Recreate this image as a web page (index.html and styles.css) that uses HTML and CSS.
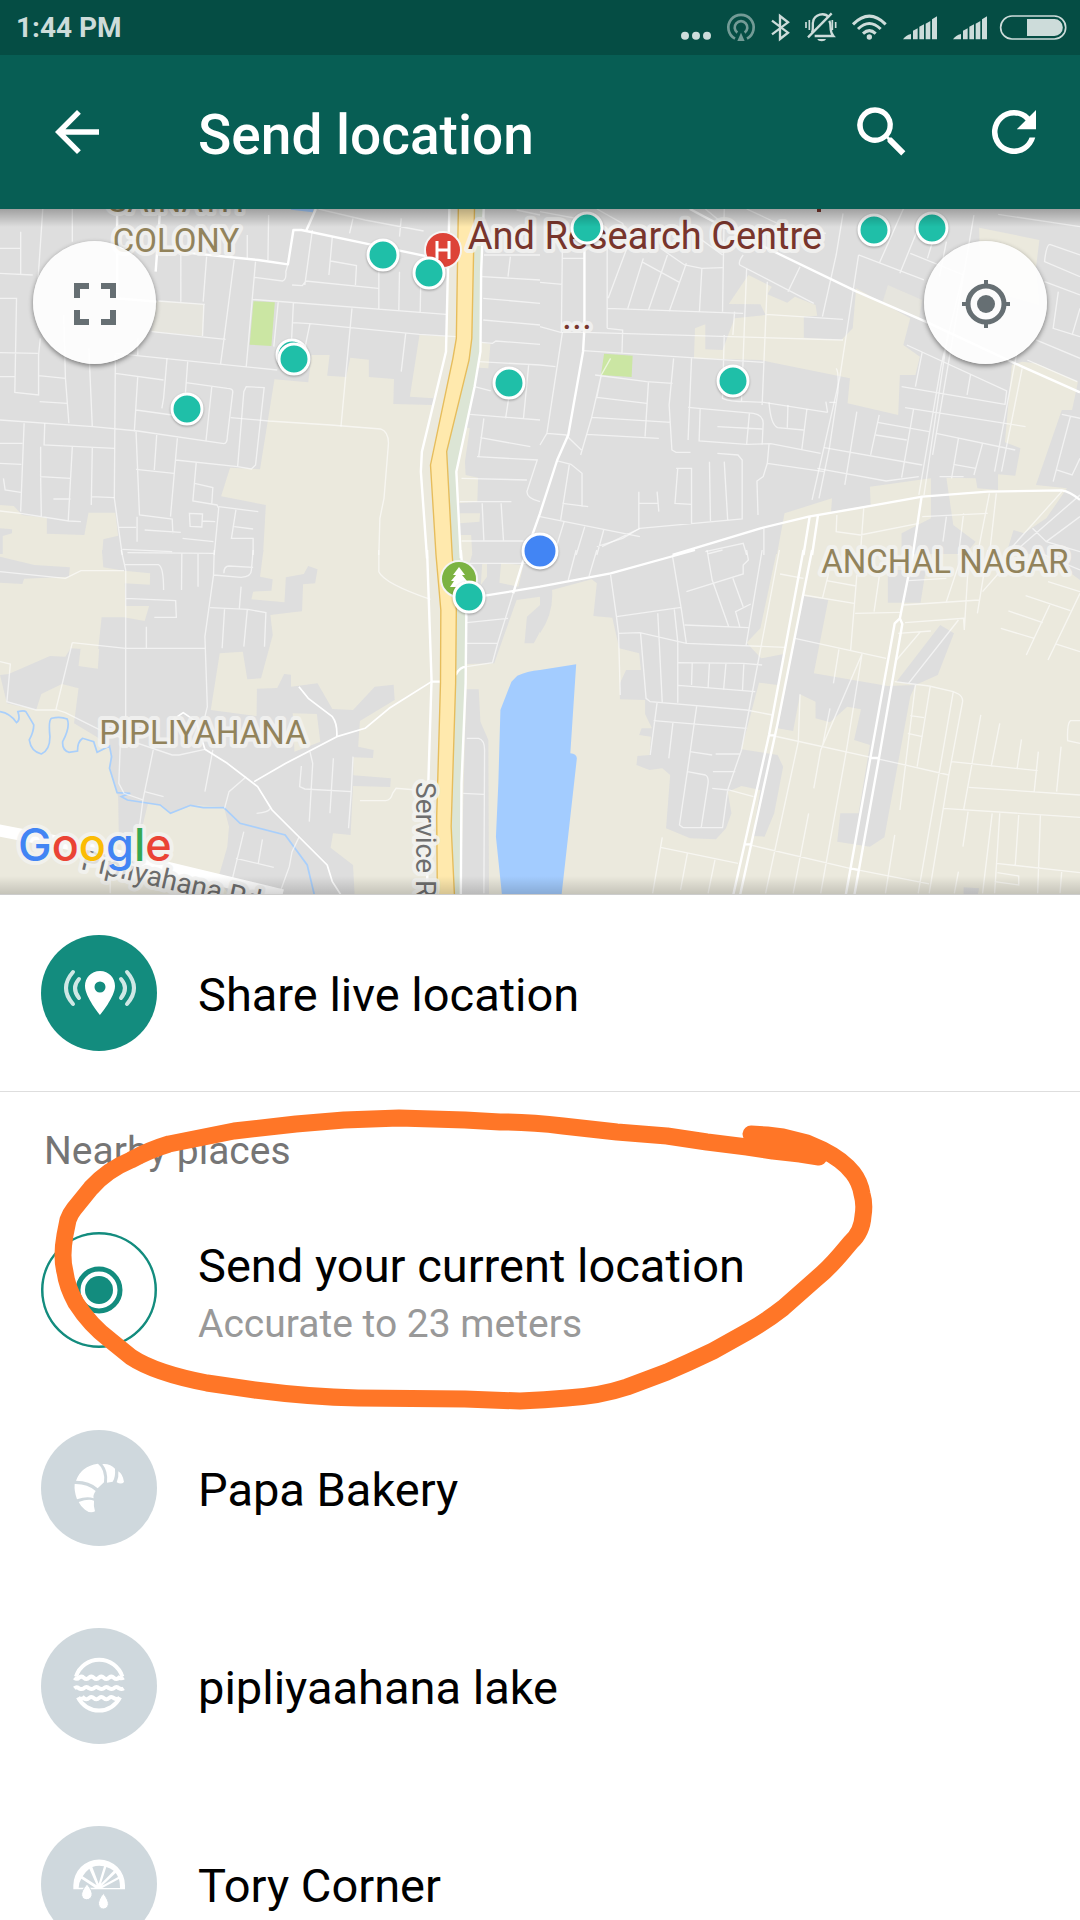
FILE: index.html
```html
<!DOCTYPE html>
<html lang="en">
<head>
    <meta charset="UTF-8">
    <meta name="viewport" content="width=device-width, initial-scale=1.0">
    <title>Send location</title>
    <link rel="stylesheet" href="styles.css">
</head>
<body>
<div class="screen">

    <div class="status-bar">
        <span class="clock">1:44 PM</span>
        <svg class="status-icons" viewBox="0 0 1260 165" aria-hidden="true">
            <!-- more -->
            <circle cx="75" cy="107" r="12"/><circle cx="108" cy="107" r="12"/><circle cx="141" cy="107" r="12"/>
            <!-- hotspot -->
            <g opacity=".55">
                <path class="line" stroke-width="8" d="M225 116a38 38 0 1 1 36 0M232 98a19 19 0 1 1 22 0"/>
                <path d="M243 98l11 25h-22z"/>
            </g>
            <!-- bluetooth -->
            <path class="line" stroke-width="7" d="M336 62l48 36-24 19V48l24 19-48 36"/>
            <!-- silent -->
            <path class="line" stroke-width="7" d="M456 98c5-12 1-24 3-32 4-24 34-30 48-14M508 62c8 16-2 30 12 46h-56"/>
            <path class="line" stroke-width="7" d="M444 112l71-72"/>
            <path class="line" stroke-width="5" d="M438 66v18M448 60v30M517 60v30M527 66v18"/>
            <path d="M472 117h26c-3 9-23 9-26 0z"/>
            <!-- wifi -->
            <path class="line" stroke-width="9" d="M579 73q49-49 98 0M594 87q34-33 68 0M609 101q19-18 38 0"/>
            <circle cx="628" cy="111" r="8"/>
            <!-- signal -->
            <path id="signal" d="M729 118q8-12 24-16v16zM759 92l14-7v33h-14zM778 80l14-7v45h-14zM797 71l14-8v55h-14zM816 58l15-9v69h-15z"/>
            <use href="#signal" x="150"/>
            <!-- battery -->
            <rect class="line" stroke-width="5" x="1022" y="48" width="195" height="69" rx="34"/>
            <path d="M1101 57h82a25 25 0 0 1 0 51h-82z"/>
        </svg>
    </div>

    <header class="app-bar">
        <button class="icon-button" aria-label="Back">
            <svg viewBox="0 0 24 24"><path d="M20 11H7.8l5.6-5.600L12 4l-8 8 8 8 1.400-1.400L7.800 13H20z"/></svg>
        </button>
        <h1>Send location</h1>
        <button class="icon-button" aria-label="Search">
            <svg viewBox="0 0 24 24"><path d="M15.5 14h-.8l-.3-.3A6.5 6.5 0 1 0 13.7 14.4l.3.3v.8l5 5 1.5-1.5zm-6 0a4.5 4.5 0 1 1 0-9 4.5 4.5 0 0 1 0 9z"/></svg>
        </button>
        <button class="icon-button" aria-label="Refresh">
            <svg viewBox="0 0 24 24"><path d="M17.65 6.35A7.96 7.96 0 0 0 12 4a8 8 0 1 0 7.73 10h-2.08A6 6 0 1 1 12 6c1.66 0 3.14.69 4.22 1.78L13 11h7V4z"/></svg>
        </button>
    </header>

    <section class="map" aria-label="Map">
        <svg class="map-canvas" viewBox="0 0 1080 685" preserveAspectRatio="xMidYMid slice">
            <rect class="built" width="1080" height="345"/>
            <rect class="land" y="345" width="1080" height="340"/>

            <!-- land, north west tile -->
            <g transform="translate(0 -4) scale(.3444 .3333)">
                <path class="land" d="M797 523L895 532 905 450H957L950 512 1005 516 1017 458 1071 464V516L1144 522 1142 597 1255 600 1225 740 1240 1060H763L772 900 642 874 668 788 755 793zM1218 390L1325 395 1300 480 1258 580 1190 575zM0 900L40 903 64 930 136 938V986L245 990 257 923H335L343 992 300 1003 296 1060H8V993L35 985V973L0 970zM1397 412L1424 418 1418 490 1390 488zM1348 665L1364 670 1350 770 1352 810 1388 818 1386 890 1330 895 1325 800zM1336 925H1394L1392 950 1336 955zM1336 990H1368L1372 1060H1336z"/>
                <path class="land" d="M1305 0H1331L1325 400 1315 460 1250 780 1266 1060H1240L1222 800 1225 740 1295 440z"/>
                <path class="land" opacity=".6" d="M455 288L592 298 588 393 440 380z"/>
                <path class="park" d="M736 289L798 292 788 423 725 419z"/>
                <path class="water" d="M845 0H915L908 22 845 14z"/>
                <path class="verge" d="M1378 0H1405L1397 200 1395 440 1378 545 1325 800 1338 1060H1313L1297 740 1362 465 1370 400z"/>
            </g>

            <!-- land, north east tile -->
            <g transform="translate(540 -4) scale(.3444 .3333)">
                <path class="land" d="M605 210L673 245 660 268 718 293 740 275 800 300 805 332 766 335V398L875 405 908 370 918 250 1075 340 1055 420 1103 455 1090 510H1045L1040 630 893 595 900 520 670 472 640 465 447 460 450 370 480 358V433L530 435 565 340 655 330 640 298 548 297zM1275 68L1450 105 1440 190 1450 300 1280 250zM1370 480L1400 470 1440 475 1562 530 1545 615H1515L1440 840 1530 850 1470 940 1405 985 1375 975 1350 1060H1225L1265 1010 1200 960 1180 818 1265 820 1270 850 1330 855V808L1380 812 1395 730 1350 712zM710 925L848 880 845 920 960 900 958 845 1135 820V940L1050 985V1060H686z"/>
                <path class="land" opacity=".6" d="M1010 240L1110 285 1100 345 995 290z"/>
                <path class="park" d="M186 446L269 452 266 516 177 510z"/>
            </g>

            <!-- land, south west tile -->
            <g transform="translate(0 341) scale(.3444 .3333)">
                <path class="built" d="M0 20L100 45 203 52 200 80 70 86 65 102 0 98zM296 0H765L755 80 792 88 788 122 735 125 730 148 826 157 830 82 882 72 895 48 922 58 915 100 880 103 877 184 850 187 785 195 792 255 758 385 718 388 705 305 638 310 612 480 745 498 746 416 805 414 825 372 845 374V410L922 400 965 477 1025 480 1088 410 1143 404 1146 450 1045 513 1040 590 1085 600 1083 624 1026 622V676L1135 685 1133 711 1025 708 1018 855 967 850 960 893 1025 945 1030 1040H670L632 990 660 890 665 830 650 770 560 765 495 790 465 765 430 760 412 835 405 860H345L343 740 320 660 322 590 280 560 215 520 228 415 180 402 120 432 105 480 20 460 0 375 25 372 145 318 190 320 205 295 285 300 295 202H360L420 213 433 168H365L362 100 435 104 436 70 360 62 300 52z"/>
                <path class="built" d="M1375 0H1568V140L1500 150 1435 340 1355 342 1345 100zM1523 280L1530 200 1568 165V245L1550 280zM1355 418H1390L1395 515 1418 570 1420 1040H1338L1350 560z"/>
                <path class="land" d="M234 297H288L284 356 228 348zM850 490L920 492 930 575 855 605z"/>
                <path class="land" d="M1400 42H1414V80L1396 105zM1455 40L1520 45 1505 110 1450 98z"/>
                <path class="verge" d="M1313 0H1338L1354 200 1352 400 1340 700 1338 1040H1320L1310 830 1323 400 1325 180z"/>
                <path class="water" d="M1502 377Q1530 364 1568 360L1673 343 1656 610Q1674 612 1675 625L1630 1040H1458L1440 860 1447 700 1453 480 1485 395z"/>
                <path class="river" d="M0 485Q30 490 48 518 60 510 52 485 70 480 75 485 90 510 98 525 98 545 85 570 90 605 120 612 145 600 145 560 140 510 150 505 175 498 195 507 205 530 182 575 180 600 200 607L225 603Q225 575 240 565L272 575 282 607 318 588 324 620 318 655 340 728 378 730 352 740 370 750 465 765 495 790 553 766 590 773H650L697 820 828 855 892 945 914 1040"/>
            </g>

            <!-- land, south east tile -->
            <g transform="translate(540 341) scale(.3444 .3333)">
                <path class="built" d="M0 0H688L640 235 600 278 642 325 708 312 690 405 636 398 585 598 690 615 706 650 680 790 652 860 617 858 640 720 585 708 545 725 556 790 540 835 511 868 436 865 366 835 378 675 355 655 318 660 280 645 283 618 318 615 322 560 288 555 295 535H325L305 492V450L232 448V400L250 360H293L288 310 230 295 210 203 155 198 165 100 150 88 35 120Q40 190 0 250z"/>
                <path class="built" d="M765 138L837 150 795 370 1010 408 1090 405 1075 440 1000 862 958 890 863 875 872 790H925L958 585 912 570 932 478 892 470 842 517 800 505V455L755 433 735 543 690 535zM1162 225L1202 250 1155 375 1090 405 1035 395zM1010 60H1120L1105 158H1010zM1230 1012L1275 1015 1270 1040H1230zM1450 0H1568V90z"/>
            </g>

            <!-- streets -->
            <g class="street" transform="translate(0 -4) scale(.3444 .3333)">
                <path d="M0 130H60M60 80V210M0 205L95 210M0 280H48L43 562 112 570V450L117 400M125 0L110 230M112 512L190 520M115 590L195 595M0 443L110 445M210 0V110M185 330L190 520 200 655M258 430L268 665M335 450L332 880 355 1050M0 515H43M0 645L270 665 400 678 650 716Q660 715 660 695L676 560Q676 550 660 550L540 533M335 505L475 525M400 515L390 680M395 615L500 630M545 470L538 570M485 460L475 580 470 610M615 545L598 708M670 638L780 648 960 660 1105 672Q1128 680 1128 715L1115 880 1103 940 1100 1050"/>
                <path d="M335 445L805 495M440 380L655 403M400 400V450M592 298L588 393M525 150V290M600 155L590 290M680 165L650 405 640 480M742 170L715 485M460 288L595 298M740 217L820 228Q832 225 830 200L836 178M848 240L878 242 888 228 1098 250M732 283L1295 328M907 75L885 240M965 95L955 210M960 168L1035 182 1032 240M1100 190V315M1160 200L1158 315M1222 220L1220 322M852 292L845 440M850 353L900 356 1218 388 1325 395M1022 310L990 665M1178 385L1165 500M900 356L885 430M808 290L795 425M1025 40L1015 85M1165 40L1160 95M925 12L1060 45 1230 78M780 30L778 165M718 90V165"/>
                <path d="M0 715H65M70 655L60 920M0 775L62 778M130 655L128 720 332 730M210 725L198 950M118 725V815L205 820M118 815L120 935M0 918L60 925 200 948 235 950M268 728L265 900M265 875L332 878M155 882H205M10 820L15 855 60 862M395 680L405 930 500 942 502 985M455 690L448 795M515 700L495 935M395 793L505 805M510 765L690 785 730 792 742 780 767 548 715 545 708 560 690 785M570 770L560 888 630 900 635 910 622 1050M565 835L618 848 615 895M550 925L588 927 586 966 552 964zM588 948L625 950M398 935V1010M420 975L525 982M345 967H395M530 1000L620 1010M355 1033L500 1040M635 905L750 920M685 915L672 1000 735 1000V1050M680 965L735 972"/>
                <path d="M1405 150H1568M1400 215L1568 225M1403 280L1568 295M1403 345L1568 360M1398 412L1430 415 1440 408 1568 418M1390 470L1568 480M1535 480L1520 640M1480 560L1468 640M1378 545L1425 558M1365 628L1568 645M1405 640L1390 755M1395 698L1540 725M1385 755L1560 765 1530 860Q1530 880 1568 890M1340 820L1530 825M1335 890H1485M1400 895L1405 1008M1455 895L1462 1008M1340 1008H1520M1482 155L1475 215M1500 15L1568 30"/>
            </g>
            <g class="street" transform="translate(540 -4) scale(.3444 .3333)">
                <path d="M0 20L130 45M165 12L240 55 255 100M65 130L62 380M65 160H130M0 232L65 238M0 365L60 382H130L880 405 M195 130V370M270 80L198 280M300 160L255 310M370 150L315 315M425 175L375 320M470 190L463 320M535 12L530 320M295 170L405 232M350 130L420 180 470 190 530 188M430 75L530 150M195 310L590 325M195 370L240 375 238 445M125 437L650 472M565 320L560 390M600 190L585 590M660 230L645 600M655 328L880 343M535 390L530 580Q550 590 600 590L650 592 835 622M580 180Q575 170 590 150M580 180L795 295M755 185L720 260M880 25L860 150 820 335M925 150L870 520 790 885M925 150L1115 225M1060 0L985 175M1100 65L1045 205M1140 110L1125 160M1075 145L1230 210M1180 110L1160 215M480 12L560 80M600 12L700 60 830 85"/>
                <path d="M1260 30L1140 750M1230 200L1165 480 1100 870M1185 380L1115 870M1385 440L1320 800M1400 490L1340 800M1065 420L1355 558 1350 600M1110 440L1090 545M1050 545L1350 598M1060 608L1410 665M1085 610L1050 818M980 652L1130 680M975 690L1065 705M1250 510L1240 570M1150 685L1380 735M1215 700L1195 820M1285 715L1260 810M1200 778L1265 790M1160 815H1230M920 620L885 840M985 630L960 750M825 728L1110 780M805 790L1005 828 1100 815M1568 65L1330 28M1480 118Q1470 120 1465 170L1568 215M1480 118L1568 150M1465 230L1568 270M1505 260L1490 370 1568 395M1440 405L1568 460M1568 310L1545 390M1415 465L1560 530M1515 628L1568 640M1540 635L1490 830M1500 795L1545 810 1568 760"/>
                <path d="M160 510L310 530 385 535M205 460L178 510 165 577M315 530L305 695M165 577L310 595M150 637L380 652M178 510L150 637 118 750M135 688L345 700M388 460L375 600 383 735 395 742H437M440 460L430 705M430 607L620 625Q648 630 648 655L645 720M465 612L462 708 600 718 670 716 815 745M608 625L600 718M515 665L645 672M665 592Q670 660 690 668L765 675M720 600L718 668M775 612L760 735M835 622L830 590M665 718L660 775 648 815 630 828 633 930M660 775L825 800M50 768L90 778 122 805V905M85 780L60 945M65 895L140 905M515 745L575 750 587 765V942L290 970 180 1025M395 790H440V960M400 790L392 895 440 898M492 770L495 948M535 770L545 945M287 860V970M287 895H342M340 860L345 920M0 935L290 995M75 690L120 735M0 480L45 485M65 382L20 685 0 720M20 685L78 690M860 490Q868 500 865 560L840 730 810 880M840 592H862"/>
                <path d="M862 930L860 980 930 990 1100 955M940 910L930 1050M1110 935L1300 925M1180 935L1170 1010M1230 925L1215 1050M1305 865L1270 1050M1325 865L1305 1050M1515 860L1350 1050M1568 870L1395 1025M1430 970L1470 1010 1568 1040M1568 935L1470 1010M290 970L240 1000 165 1025M480 1040L590 1015 600 1050M650 970V1050M130 965L105 1050M185 975L165 1050M70 950L40 1050"/>
            </g>
            <g class="street" transform="translate(0 341) scale(.3444 .3333)">
                <path d="M0 65L190 85 235 62H360M352 0L365 60V500M360 44H460Q475 50 475 120M370 8L620 10M528 10L527 120M575 10V110M622 0L620 75 595 260 602 470 595 500M620 75L700 82Q730 80 730 60L735 0M650 70Q650 48 665 48L735 52M700 110L695 175M610 173L720 178 772 188 768 290M652 178L645 295M718 180L708 290M365 145L510 152 512 202H448M425 230V295M210 278L365 295H595M210 278L162 480M0 335L30 342 20 455 105 480H165L190 488 300 545 500 615H520L595 598M350 560L345 700 360 730 415 750 405 830M445 600L415 750M420 725L475 740M618 600L595 725M900 605L908 640 898 815M968 625L958 790M875 648L870 710 885 717 1020 725 1012 835M1025 620L1020 725M708 845L675 985M762 868L750 940M685 925L795 952M868 862L848 905 840 950 812 1030M745 790Q780 788 785 775M715 680L665 725 652 775M1045 752L1120 752Q1135 750 1140 730L1150 715 1210 720M1100 0V65Q1115 100 1250 148M320 1030V990"/>
                <path d="M1360 40H1540M1355 218L1475 205M1355 280H1445M1355 350L1430 338 1445 280 1490 130M1355 565H1390Q1407 570 1407 600L1405 1030M1345 730L1405 733"/>
            </g>
            <g class="street" transform="translate(540 341) scale(.3444 .3333)">
                <path d="M105 0L82 90M165 0L142 80M205 75L222 200 228 250 233 435M385 20L410 175 425 280M485 0L500 90 548 230M485 12L530 0M600 0L605 30 590 45V72L425 125M560 85L590 170M612 162L568 185 580 230M645 0L598 288M222 200L410 172M228 250L290 248 425 280 712 292M292 250L308 445 320 455 600 480 675 495M342 190L355 458M390 178L400 275V458M420 225L605 233M402 338L590 340 645 345M442 340L440 405M492 340L488 415M540 340L533 420M592 340L588 420M402 406L625 425M340 458L320 615M330 512L600 535M455 468L430 650 405 825 415 833H530L545 720 585 600 695 0M386 518L374 625M435 605L500 615M510 612H583M428 665L480 675Q490 680 488 700L468 833M502 665H567M500 715L548 720 620 740M350 892L575 940M355 862L350 892 327 1030M428 910L408 1020M508 930L488 1030"/>
                <path d="M697 72L765 85M765 135L912 160M838 70L820 145M832 92L918 108M920 75L902 300M915 190L1045 187M985 80L970 185M740 265L1005 325M868 298L852 400M935 312L815 600 795 715M755 433L750 575 655 1030M842 475L820 590M890 600L815 1030M935 312L890 600M680 558L1040 640 1187 675M610 885L900 955 1130 1002M780 790L735 1030M1055 165L1275 150M1060 218L1230 205 1232 240M1040 250L1135 243M1105 245L1035 330M1215 210L1070 400M1230 0L1180 155M1300 0L1270 190M1245 20L1232 240M1070 92L1180 85M1030 395L1130 408 1200 425 1215 432Q1228 440 1227 455L1187 675 1130 1030M1090 405L1045 780M1133 410L1095 650M1200 425L1098 1030M1075 497L1115 503M1068 550L1110 560M1030 855L1003 1030M1195 635L1445 662M1280 495L1230 780M1335 520L1310 650M1398 568L1385 658M1447 605L1435 725M1513 590L1500 725M1245 712L1568 735M1170 775L1568 802M1243 785L1228 890M1313 790L1285 1030M1335 790L1320 1030M1390 795L1380 945M1453 795L1445 1030M1325 940L1568 968M1328 968L1390 978V1005L1320 995M1215 965L1203 1030M1515 962L1510 1030"/>
                <path d="M1410 137L1540 182M1360 183L1460 218M1338 235L1435 265M1480 165L1412 315M1568 130L1475 330M1475 95L1568 125M1497 282L1568 305M1430 0L1568 60M1340 60L1285 125M1568 512H1540Q1530 520 1532 572L1568 580"/>
            </g>

            <!-- main roads -->
            <g class="road" transform="translate(0 -4) scale(.3444 .3333)">
                <path d="M515 140L750 165 836 178 852 75H875L1060 115 1290 165M890 75L917 12M340 12V280L455 290M465 12L452 200M1305 0L1295 440 1225 740 1222 800 1240 1060M1405 0L1397 200 1395 440 1378 545 1325 800 1338 1060"/>
            </g>
            <g class="road" transform="translate(540 -4) scale(.3444 .3333)">
                <path d="M435 12L560 80 920 260 1120 350 1400 485 1568 562M129 130V370L125 440 82 690 50 765 0 925-48 1065M385 1050L640 970 780 935 960 903 1110 875 1300 860 1515 856Q1540 860 1568 885M783 935L765 1050M807 932L790 1050M1108 875L1075 1100"/>
            </g>
            <g class="road" transform="translate(0 341) scale(.3444 .3333)">
                <path d="M1240 0L1253 390 1243 720 1240 1040M1338 0L1354 200 1352 400 1340 700 1338 1040M1520 30L1490 130M1253 395H1282M1323 375Q1335 350 1355 350M1390 140L1568 110 1773 70 2018 0"/>
                <path stroke-width="5" d="M868 410L895 445 965 500Q980 520 978 560M515 500L532 488 570 515 595 598 660 640 748 710 790 780 950 945 965 995 990 1035M738 695L830 640 978 560 1060 535 1130 475 1253 395"/>
                <path stroke-width="36" d="M-20 838L200 882 820 1036"/>
            </g>
            <g class="road" transform="translate(540 341) scale(.3444 .3333)">
                <path d="M765 0L665 555 560 1040M790 0L690 520 580 1040M1075 50L1045 205 1030 220 960 620 887 1040M1045 205L1052 222 985 620 912 1040M665 556H682M958 624H985M592 883H612M900 955L925 960"/>
            </g>

            <!-- highway -->
            <g class="highway">
                <path transform="translate(0 -4) scale(.3444 .3333)" d="M1331 0L1325 400 1315 460 1250 780 1266 1050 1280 1215 1279 1435 1268 1835 1270 2080H1320L1310 1865 1323 1435 1325 1215 1313 1050 1297 740 1362 465 1370 400 1378 0z"/>
            </g>

            <g class="road-name">
                <text transform="translate(80 660) rotate(13)">Pipliyahana Rd</text>
                <text transform="translate(416 573) rotate(90)">Service R</text>
            </g>
            <g class="district">
                <text x="176" y="3">SAINATH</text>
                <text x="176" y="43">COLONY</text>
                <text x="203" y="535">PIPLIYAHANA</text>
                <text x="945" y="364">ANCHAL NAGAR</text>
            </g>
            <g class="poi-name">
                <text x="645" y="40">And Research Centre</text>
                <text x="577" y="120">...</text>
            </g>
            <rect x="817" y="0" width="4" height="3" fill="#78352c"/>

            <g class="poi">
                <circle cx="443" cy="41" r="18" fill="#dd4338"/>
                <path d="M437 32v18M449 32v18M437 41h12" stroke="#fff" stroke-width="3"/>
                <circle cx="459" cy="370" r="18" fill="#7cb342"/>
                <path d="M459 358l6 8h-3l5 6h-3l4 6h-7v2h-4v-2h-7l4-6h-3l5-6h-3z" fill="#fff"/>
            </g>
            <g class="pin">
                <circle cx="383" cy="46" r="15"/>
                <circle cx="429" cy="64" r="15"/>
                <circle cx="292" cy="146" r="15"/>
                <circle cx="294" cy="150" r="15"/>
                <circle cx="187" cy="200" r="15"/>
                <circle cx="509" cy="174" r="15"/>
                <circle cx="587" cy="19" r="15"/>
                <circle cx="874" cy="21" r="15"/>
                <circle cx="932" cy="19" r="15"/>
                <circle cx="733" cy="172" r="15"/>
                <circle cx="469" cy="388" r="15"/>
                <circle class="me" cx="540" cy="342" r="17"/>
            </g>

            <text class="google" x="18" y="652"><tspan fill="#4285f4">G</tspan><tspan fill="#ea4335">o</tspan><tspan fill="#fbbc05">o</tspan><tspan fill="#4285f4">g</tspan><tspan fill="#34a853">l</tspan><tspan fill="#ea4335">e</tspan></text>
        </svg>
        <div class="map-controls">
            <button class="fab" aria-label="Full screen">
                <svg viewBox="0 0 48 48"><path d="M3 19V4h15v6H9v9zM30 4h15v15h-6v-9h-9zM3 31h6v9h9v6H3zM39 31h6v15H30v-6h9z"/></svg>
            </button>
            <button class="fab" aria-label="My location">
                <svg viewBox="0 0 48 50"><circle cx="24" cy="26" r="9"/><circle cx="24" cy="26" r="18" fill="none" stroke="#666f73" stroke-width="5"/><path d="M22 2h4v6h-4zM22 44h4v6h-4zM0 24h6v4H0zM42 24h6v4h-6z"/></svg>
            </button>
        </div>
    </section>

    <button class="place live">
        <svg class="avatar teal" viewBox="0 0 116 116" aria-hidden="true">
            <path fill-rule="evenodd" d="M59 36c-9 0-15 7-15 15 0 11 15 29 15 29s15-18 15-29c0-8-6-15-15-15zm0 10.500a5.500 5.500 0 1 1 0 11 5.500 5.500 0 0 1 0-11z"/>
            <path class="wave" d="M38 44q-8 9 0 19M32 37q-14 16 0 32M80 44q8 9 0 19M86 37q14 16 0 32"/>
        </svg>
        <span class="name">Share live location</span>
    </button>

    <section class="nearby">
        <h2>Nearby places</h2>
        <button class="place">
            <svg class="avatar current" viewBox="0 0 116 116" aria-hidden="true">
                <circle cx="58" cy="58" r="57" fill="none" stroke-width="3"/>
                <circle cx="58" cy="58" r="21" fill="none" stroke-width="5"/>
                <circle cx="58" cy="58" r="14" stroke="none"/>
            </svg>
            <span class="text">
                <span class="name">Send your current location</span>
                <span class="detail">Accurate to 23 meters</span>
            </span>
        </button>
        <button class="place">
            <svg class="avatar" viewBox="63 60 348 348" aria-hidden="true">
                <path d="M168 212q15-44 66-51 22 18 18 56l-19 18q-24-23-65-23zM164 222q38-1 63 21-9 13-6 22-20-7-50 3-9-24-7-46zM176 276q30-11 46-4-2 14 3 32-14 8-30-5-13-10-19-23zM247 162q24-2 38 14 2 26-7 39l-17 3q4-34-14-56zM295 184q14 9 17 32-8 9-22 1 7-16 5-33z"/>
            </svg>
            <span class="name">Papa Bakery</span>
        </button>
        <button class="place">
            <svg class="avatar" viewBox="63 654 348 348" aria-hidden="true">
                <path class="stroke" stroke-width="12" d="M168 800a73 73 0 0 1 139 0M174 862a70 70 0 0 0 126 0"/>
                <path class="stroke" stroke-width="12" d="M163 803q8 7 14 0 9-6 14 0 9 8 16 0 8-6 14 0 9 8 16 0 8-6 14 0 9 8 16 0 8-6 14 0 9 8 16 0 8 4 14 0M163 835q8-7 14 0 9 4 14 0 9-8 16 0 8 4 14 0 9-8 16 0 8 4 14 0 9-8 16 0 8 4 14 0 9-8 16 0 8 4 14 0M176 864q9 5 15 0 9 8 16 0 8-6 14 0 9 8 16 0 8-6 14 0 9 8 16 0 8-6 14 0 9 6 18 0"/>
            </svg>
            <span class="name">pipliyaahana lake</span>
        </button>
        <button class="place">
            <svg class="avatar" viewBox="63 1248 348 348" aria-hidden="true">
                <path fill-rule="evenodd" d="M160 1438v-12a77 77 0 0 1 155 0v12zm16-5h49l-41-27q-8 12-8 27zm12-34l42 27-22-50q-12 9-20 23zm29-28l19 50 16-52q-18-4-35 2zm42 0l-16 50 38-39q-10-8-22-11zm28 18l-41 38 48-26q-3-7-7-12zm10 18l-50 27h53q0-16-3-27z"/>
                <path class="drop" d="M201 1422q18 22 15 34-4 13-16 13t-15-13q-2-12 16-34zM250 1450q17 22 15 34-4 13-15 13t-14-13q-3-12 14-34z"/>
            </svg>
            <span class="name">Tory Corner</span>
        </button>

        <!-- hand drawn highlight -->
        <svg class="highlight" viewBox="0 0 1080 330" aria-hidden="true">
            <path d="M751 42L767 43 783 45 807 51 823 58Q843 68 853 81 860 90 862 102 865 112 863 124 862 140 851 150L840 163Q828 177 817 186L783 216Q765 230 747 240L713 259Q690 270 667 280L627 295Q600 304 567 306 545 308 520 309L465 307 358 306Q310 305 255 298L207 291Q155 281 131 265L110 248Q90 233 76 211 67 195 65 180 61 165 65 143L68 128Q70 122 74 117L91 96Q107 78 131 68 149 58 169 52L234 39 296 32 344 28 399 26 465 28 500 30Q530 30 563 34L617 40 667 44 707 50 747 55 773 59 800 62 819 65"/>
        </svg>
    </section>

</div>
</body>
</html>
```

FILE: styles.css
```css
* {
    box-sizing: border-box;
}
body {
    margin: 0;
    background-color: #fff;
    color: #000;
    font-family: Roboto, sans-serif;
}
button {
    padding: 0;
    border: none;
    background: none;
    color: inherit;
    font: inherit;
    text-align: left;
    cursor: pointer;
}
svg {
    display: block;
    flex-shrink: 0;
}
.screen {
    height: 100vh;
    overflow: hidden;
}

/* status bar */
.status-bar {
    display: flex;
    justify-content: space-between;
    align-items: center;
    height: 55px;
    padding-left: 16px;
    background-color: #054d44;
    color: #cddcda;
}
.clock {
    font-size: 28px;
    font-weight: 700;
}
.status-icons {
    width: 420px;
    height: 55px;
    fill: #cddcda;
}
.status-icons .line {
    fill: none;
    stroke: #cddcda;
}

/* app bar */
.app-bar {
    display: flex;
    align-items: center;
    gap: 66px;
    height: 154px;
    padding: 0 33px 0 44px;
    background-color: #075e54;
    color: #fff;
}
.app-bar h1 {
    flex: 1;
    margin: 0;
    padding: 6px 0 0 22px;
    font-size: 55px;
    font-weight: 500;
    line-height: 64px;
}
.icon-button svg {
    width: 66px;
    height: 66px;
    fill: #fff;
}

/* map */
.map {
    position: relative;
    height: 686px;
    border-bottom: 1px solid #ccc;
    overflow: hidden;
}
.map::after {
    content: "";
    position: absolute;
    inset: 0;
    background: linear-gradient(rgba(0, 0, 0, .28), transparent 18px, transparent calc(100% - 18px), rgba(0, 0, 0, .16));
    pointer-events: none;
}
.map-canvas {
    width: 100%;
    height: 100%;
}
.built {
    fill: #dedede;
}
.land {
    fill: #ebe9dd;
}
.park {
    fill: #cbe6a3;
}
.verge {
    fill: #dce5d5;
}
.water {
    fill: #a3ccff;
}
.river {
    fill: none;
    stroke: #a9cffb;
    stroke-width: 5;
}
.street {
    fill: none;
    stroke: #fff;
    stroke-width: 4;
    stroke-opacity: .6;
}
.road {
    fill: none;
    stroke: #fff;
    stroke-width: 7;
    stroke-linejoin: round;
}
.highway {
    fill: #ffe9ad;
    stroke: #e6bd5c;
    stroke-width: 4;
}
.road-name, .district, .poi-name, .google {
    paint-order: stroke;
    stroke: rgba(243, 243, 241, .85);
    stroke-width: 8px;
    stroke-linejoin: round;
}
.road-name {
    font-size: 28px;
    fill: #6e6e6e;
}
.district {
    font-size: 33px;
    fill: #92835b;
    text-anchor: middle;
}
.poi-name {
    font-size: 38px;
    fill: #78352c;
    text-anchor: middle;
}
.google {
    font-family: Inter, sans-serif;
    font-size: 45px;
    font-weight: 500;
}
.poi circle {
    stroke: #f5f5f5;
    stroke-width: 2;
}
.pin circle {
    fill: #1fbfa8;
    stroke: #fff;
    stroke-width: 3;
    filter: drop-shadow(0 1px 1px rgba(0, 0, 0, .3));
}
.pin .me {
    fill: #4285f4;
}
.map-controls {
    position: absolute;
    top: 32px;
    left: 33px;
    right: 33px;
    z-index: 1;
    display: flex;
    justify-content: space-between;
}
.fab {
    display: flex;
    align-items: center;
    justify-content: center;
    width: 123px;
    height: 123px;
    border-radius: 50%;
    background-color: rgba(255, 255, 255, .9);
    box-shadow: 0 2px 5px rgba(0, 0, 0, .45);
}
.fab svg {
    width: 48px;
    height: 50px;
    fill: #666f73;
}

/* places */
.place {
    display: flex;
    align-items: center;
    gap: 41px;
    width: 100%;
    height: 198px;
    padding: 0 41px;
}
.live {
    height: 197px;
    border-bottom: 1px solid #dedede;
}
.avatar {
    width: 116px;
    height: 116px;
    border-radius: 50%;
    background-color: #cfd8dd;
    fill: #fff;
}
.avatar .stroke {
    fill: none;
    stroke: #fff;
}
.avatar .drop {
    stroke: #cfd8dd;
    stroke-width: 3;
}
.teal {
    background-color: #138c7e;
}
.teal .wave {
    fill: none;
    stroke: rgba(255, 255, 255, .8);
    stroke-width: 4;
    stroke-linecap: round;
}
.current {
    background-color: #fff;
    fill: #138c7e;
    stroke: #138c7e;
}
.text {
    display: flex;
    flex-direction: column;
}
.name {
    padding-top: 4px;
    font-size: 47px;
    line-height: 64px;
}
.detail {
    color: #999;
    font-size: 39px;
    line-height: 52px;
}
.nearby {
    position: relative;
}
.nearby h2 {
    margin: 0;
    padding: 33px 44px 14px;
    color: #757575;
    font-size: 39px;
    font-weight: 400;
    line-height: 52px;
}
.highlight {
    position: absolute;
    top: 0;
    left: 0;
    width: 100%;
    fill: none;
    stroke: #ff7627;
    stroke-width: 17;
    stroke-linecap: round;
    stroke-linejoin: round;
    pointer-events: none;
}
```
